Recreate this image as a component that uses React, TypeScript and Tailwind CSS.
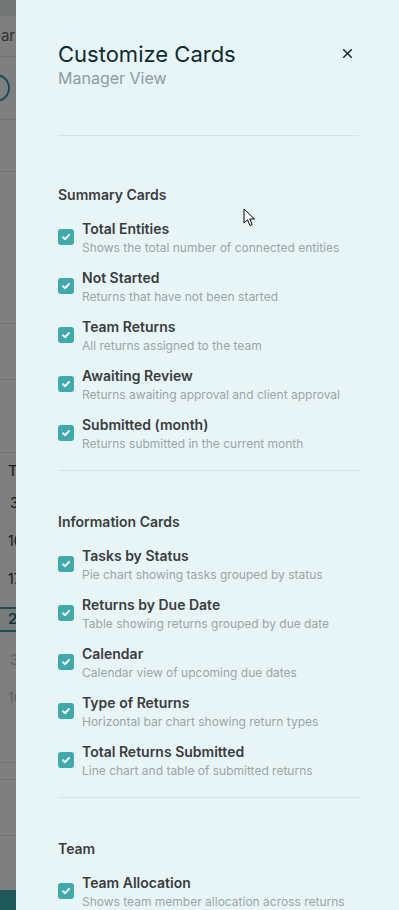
import { X } from 'lucide-react'

type CardOption = {
  title: string
  description: string
}

const sections: { name: string; items: CardOption[] }[] = [
  {
    name: 'Summary Cards',
    items: [
      { title: 'Total Entities', description: 'Shows the total number of connected entities' },
      { title: 'Not Started', description: 'Returns that have not been started' },
      { title: 'Team Returns', description: 'All returns assigned to the team' },
      { title: 'Awaiting Review', description: 'Returns awaiting approval and client approval' },
      { title: 'Submitted (month)', description: 'Returns submitted in the current month' },
    ],
  },
  {
    name: 'Information Cards',
    items: [
      { title: 'Tasks by Status', description: 'Pie chart showing tasks grouped by status' },
      { title: 'Returns by Due Date', description: 'Table showing returns grouped by due date' },
      { title: 'Calendar', description: 'Calendar view of upcoming due dates' },
      { title: 'Type of Returns', description: 'Horizontal bar chart showing return types' },
      { title: 'Total Returns Submitted', description: 'Line chart and table of submitted returns' },
    ],
  },
  {
    name: 'Team',
    items: [
      { title: 'Team Allocation', description: 'Shows team member allocation across returns' },
      { title: 'Workload', description: 'Returns assigned to each team member' },
    ],
  },
]

function Checkbox() {
  return (
    <div className="w-4 h-4 shrink-0 rounded-[3px] bg-[#3fa9ab] flex items-center justify-center">
      <svg width="10" height="10" viewBox="0 0 10 10" fill="none">
        <path d="M2 5.2 L4.1 7.2 L8 3" stroke="white" strokeWidth="1.9" strokeLinecap="round" strokeLinejoin="round" />
      </svg>
    </div>
  )
}

// the dimmed page behind the drawer, only a thin strip of it shows
function BackgroundStrip() {
  return (
    <div className="relative w-4 shrink-0 overflow-hidden bg-white" aria-hidden>
      <div className="h-4 bg-[#e8ecec]" />
      <div className="h-[41px] border-b border-[#e2e6e6] flex items-center">
        <span className="-ml-[8px] text-[15px] text-[#666]">ear</span>
      </div>
      <div className="h-[63px] border-b border-[#e2e6e6] flex items-center">
        <div className="-ml-[18px] w-7 h-7 rounded-full border-2 border-[#3a9a9c]" />
      </div>
      <div className="h-[52px] border-b border-[#e2e6e6]" />
      <div className="h-[152px] border-b border-[#e2e6e6]" />
      <div className="h-[56px] border-b border-[#e2e6e6]" />
      <div className="h-[73px] border-b border-[#e2e6e6]" />
      <div className="h-[154px] flex flex-col text-[14px] text-[#333] leading-none">
        <span className="ml-[8px] mt-[10px] text-[15px]">T</span>
        <span className="ml-[10px] mt-[18px]">3</span>
        <span className="ml-[8px] mt-[24px]">10</span>
        <span className="ml-[8px] mt-[24px]">17</span>
      </div>
      <div className="h-[25px] border-y-2 border-[#3a9a9c] bg-[#eef6f6] flex items-center">
        <span className="ml-[8px] text-[15px] font-semibold text-[#2d6d70]">24</span>
      </div>
      <div className="h-[131px] border-b border-[#e2e6e6] flex flex-col text-[14px] text-[#c4c4c4] leading-none">
        <span className="ml-[10px] mt-[21px]">3</span>
        <span className="ml-[8px] mt-[24px]">10</span>
      </div>
      <div className="h-[17px] border-b border-[#e2e6e6]" />
      <div className="h-[56px] border-b border-[#e2e6e6]" />
      <div className="mt-[54px] h-5 bg-[#3fb3b4]" />
      <div className="absolute inset-0 bg-black/50" />
    </div>
  )
}

export default function App() {
  return (
    <div
      className="flex w-[399px] h-[910px] overflow-hidden"
      style={{ fontFamily: 'Inter, "Noto Sans", sans-serif' }}
    >
      <BackgroundStrip />

      <div className="relative flex-1 bg-[#e8f5f6] pl-[42px] pr-10">
        {/* Header */}
        <div className="pt-10 pb-[47px] border-b border-[#d6e4e6] flex items-start justify-between">
          <div>
            <h2 className="text-[22px] leading-7 text-[#0f2b2f]">Customize Cards</h2>
            <p className="text-[16px] leading-5 text-[#8c9ca1]">Manager View</p>
          </div>
          <button className="mt-[6px] mr-[4px] text-[#1d2f33]">
            <X size={15} strokeWidth={2.6} />
          </button>
        </div>

        {/* Sections */}
        {sections.map((section, i) => (
          <div
            key={section.name}
            className={`${i === 0 ? 'pt-[49px]' : 'pt-[41px]'} pb-[18px] border-b border-[#d6e4e6]`}
          >
            <h3 className="text-[14px] leading-5 font-semibold text-[#3b3d3e] mb-[13px]">
              {section.name}
            </h3>
            <div className="flex flex-col gap-[11px]">
              {section.items.map((item) => (
                <label key={item.title} className="flex items-center gap-2">
                  <Checkbox />
                  <div>
                    <div className="text-[14px] leading-[22px] font-semibold text-[#3a3c3d]">{item.title}</div>
                    <div className="text-[12px] leading-4 text-[#9aa5a8]">{item.description}</div>
                  </div>
                </label>
              ))}
            </div>
          </div>
        ))}

        {/* mouse pointer */}
        <svg className="absolute left-[227px] top-[208px]" width="14" height="20" viewBox="0 0 14 20">
          <path d="M1 1 L1 15 L4.5 11.8 L7 17.5 L9.2 16.5 L6.8 11 L11.5 11 Z" fill="white" stroke="black" strokeWidth="1" strokeLinejoin="round" />
        </svg>
      </div>
    </div>
  )
}
